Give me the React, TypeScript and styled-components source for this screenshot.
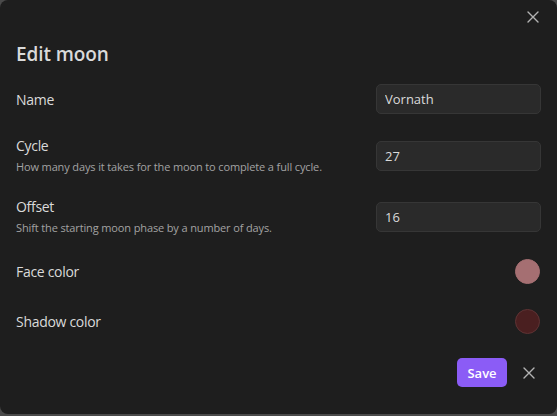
import React from "react";
import styled, { createGlobalStyle } from "styled-components";

const GlobalStyle = createGlobalStyle`
  html, body {
    margin: 0;
    padding: 0;
    background: #4a4a4a;
  }
  * { box-sizing: border-box; }
`;

const Modal = styled.div`
  width: 557px;
  height: 414px;
  background: #1e1e1e;
  border-radius: 8px;
  padding: 0 16px;
  font-family: "Open Sans", "Noto Sans", sans-serif;
  color: #dadada;
  display: flex;
  flex-direction: column;
`;

const TopBar = styled.div`
  display: flex;
  justify-content: flex-end;
  padding-top: 5px;
  margin-right: -4px;
  height: 39px;
`;

const IconButton = styled.button`
  width: 24px;
  height: 24px;
  padding: 0;
  border: none;
  background: transparent;
  color: #b3b3b3;
  display: flex;
  align-items: center;
  justify-content: center;
  cursor: pointer;
`;

const Title = styled.h2`
  margin: 0 0 4px 0;
  font-size: 19px;
  font-weight: 600;
  line-height: 30px;
  letter-spacing: -0.1px;
  color: #dadada;
`;

const Row = styled.div<{ $pad?: number }>`
  display: flex;
  align-items: center;
  justify-content: space-between;
  padding: ${(p) => p.$pad ?? 11}px 0;
`;

const Info = styled.div`
  display: flex;
  flex-direction: column;
  gap: 4px;
`;

const Label = styled.div`
  font-size: 14px;
  line-height: 19px;
  letter-spacing: -0.3px;
  color: #dadada;
`;

const Desc = styled.div`
  font-size: 11px;
  line-height: 16px;
  letter-spacing: -0.13px;
  color: #a3a3a3;
`;

const Input = styled.input`
  width: 165px;
  height: 30px;
  background: #2a2a2a;
  border: 1px solid #363636;
  border-radius: 5px;
  padding: 0 8px;
  color: #dadada;
  font-family: inherit;
  font-size: 13px;
  outline: none;
`;

const Swatch = styled.div<{ $color: string; $ring: string }>`
  width: 25px;
  height: 25px;
  border-radius: 50%;
  background: ${(p) => p.$color};
  border: 1px solid ${(p) => p.$ring};
  margin-right: 1px;
`;

const Footer = styled.div`
  display: flex;
  justify-content: flex-end;
  align-items: center;
  gap: 10px;
  margin-top: 11px;
`;

const SaveButton = styled.button`
  height: 29px;
  width: 50px;
  padding: 0;
  background: #8b5cf6;
  color: #ffffff;
  border: none;
  border-radius: 5px;
  font-family: inherit;
  font-size: 13px;
  font-weight: 600;
`;

const XIcon = ({ size = 12 }: { size?: number }) => (
  <svg width={size} height={size} viewBox="0 0 12 12" fill="none">
    <path d="M1 1L11 11M11 1L1 11" stroke="currentColor" strokeWidth="1.4" strokeLinecap="round" />
  </svg>
);

export default function App() {
  return (
    <>
      <GlobalStyle />
      <Modal>
        <TopBar>
          <IconButton aria-label="Close">
            <XIcon />
          </IconButton>
        </TopBar>
        <Title>Edit moon</Title>
        <Row>
          <Label>Name</Label>
          <Input defaultValue="Vornath" />
        </Row>
        <Row>
          <Info>
            <Label>Cycle</Label>
            <Desc>How many days it takes for the moon to complete a full cycle.</Desc>
          </Info>
          <Input defaultValue="27" />
        </Row>
        <Row>
          <Info>
            <Label>Offset</Label>
            <Desc>Shift the starting moon phase by a number of days.</Desc>
          </Info>
          <Input defaultValue="16" />
        </Row>
        <Row $pad={12}>
          <Label>Face color</Label>
          <Swatch $color="#a56f72" $ring="#a56f72" />
        </Row>
        <Row $pad={13}>
          <Label>Shadow color</Label>
          <Swatch $color="#4a1f20" $ring="#5e3334" />
        </Row>
        <Footer>
          <SaveButton>Save</SaveButton>
          <IconButton aria-label="Cancel">
            <XIcon />
          </IconButton>
        </Footer>
      </Modal>
    </>
  );
}
